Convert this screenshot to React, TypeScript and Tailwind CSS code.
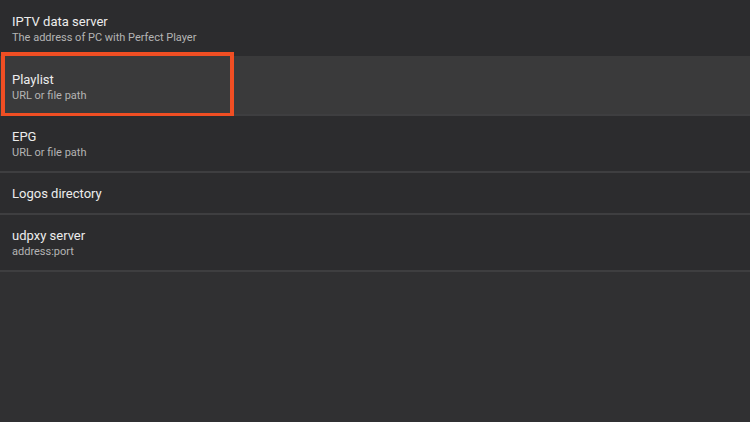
import React from 'react';

type Item = { title: string; subtitle?: string; h: string; selected?: boolean };

const items: Item[] = [
    { title: 'IPTV data server', subtitle: 'The address of PC with Perfect Player', h: 'h-[56px] pt-[2px]' },
    { title: 'Playlist', subtitle: 'URL or file path', h: 'h-[60px] pt-[4px] border-b-2' },
    { title: 'EPG', subtitle: 'URL or file path', h: 'h-[57px] pt-[2px] border-b-2' },
    { title: 'Logos directory', h: 'h-[42px] pt-[2px] border-b-2' },
    { title: 'udpxy server', subtitle: 'address:port', h: 'h-[57px] pt-[2px] border-b-2' },
];

export default function App() {
    return (
        <div className="w-[750px] h-[422px] bg-[#303032] overflow-hidden" style={{ fontFamily: 'Roboto, "Noto Sans", sans-serif' }}>
            {items.map((it, i) => (
                <div
                    key={it.title}
                    className={`relative ${it.h} flex flex-col justify-center pl-3 border-[#3e3e40] ${i === 1 ? 'bg-[#3a3a3b]' : 'bg-[#2c2c2e]'}`}
                >
                    <div className="text-[13px] leading-[16px] text-[#ececec]">{it.title}</div>
                    {it.subtitle && <div className="text-[11px] leading-[15px] text-[#b4b4b4]">{it.subtitle}</div>}
                    {i === 1 && (
                        <div className="absolute left-[1px] top-[-4px] w-[233px] h-[65px] border-4 border-[#f04e23]" />
                    )}
                </div>
            ))}
        </div>
    );
}
